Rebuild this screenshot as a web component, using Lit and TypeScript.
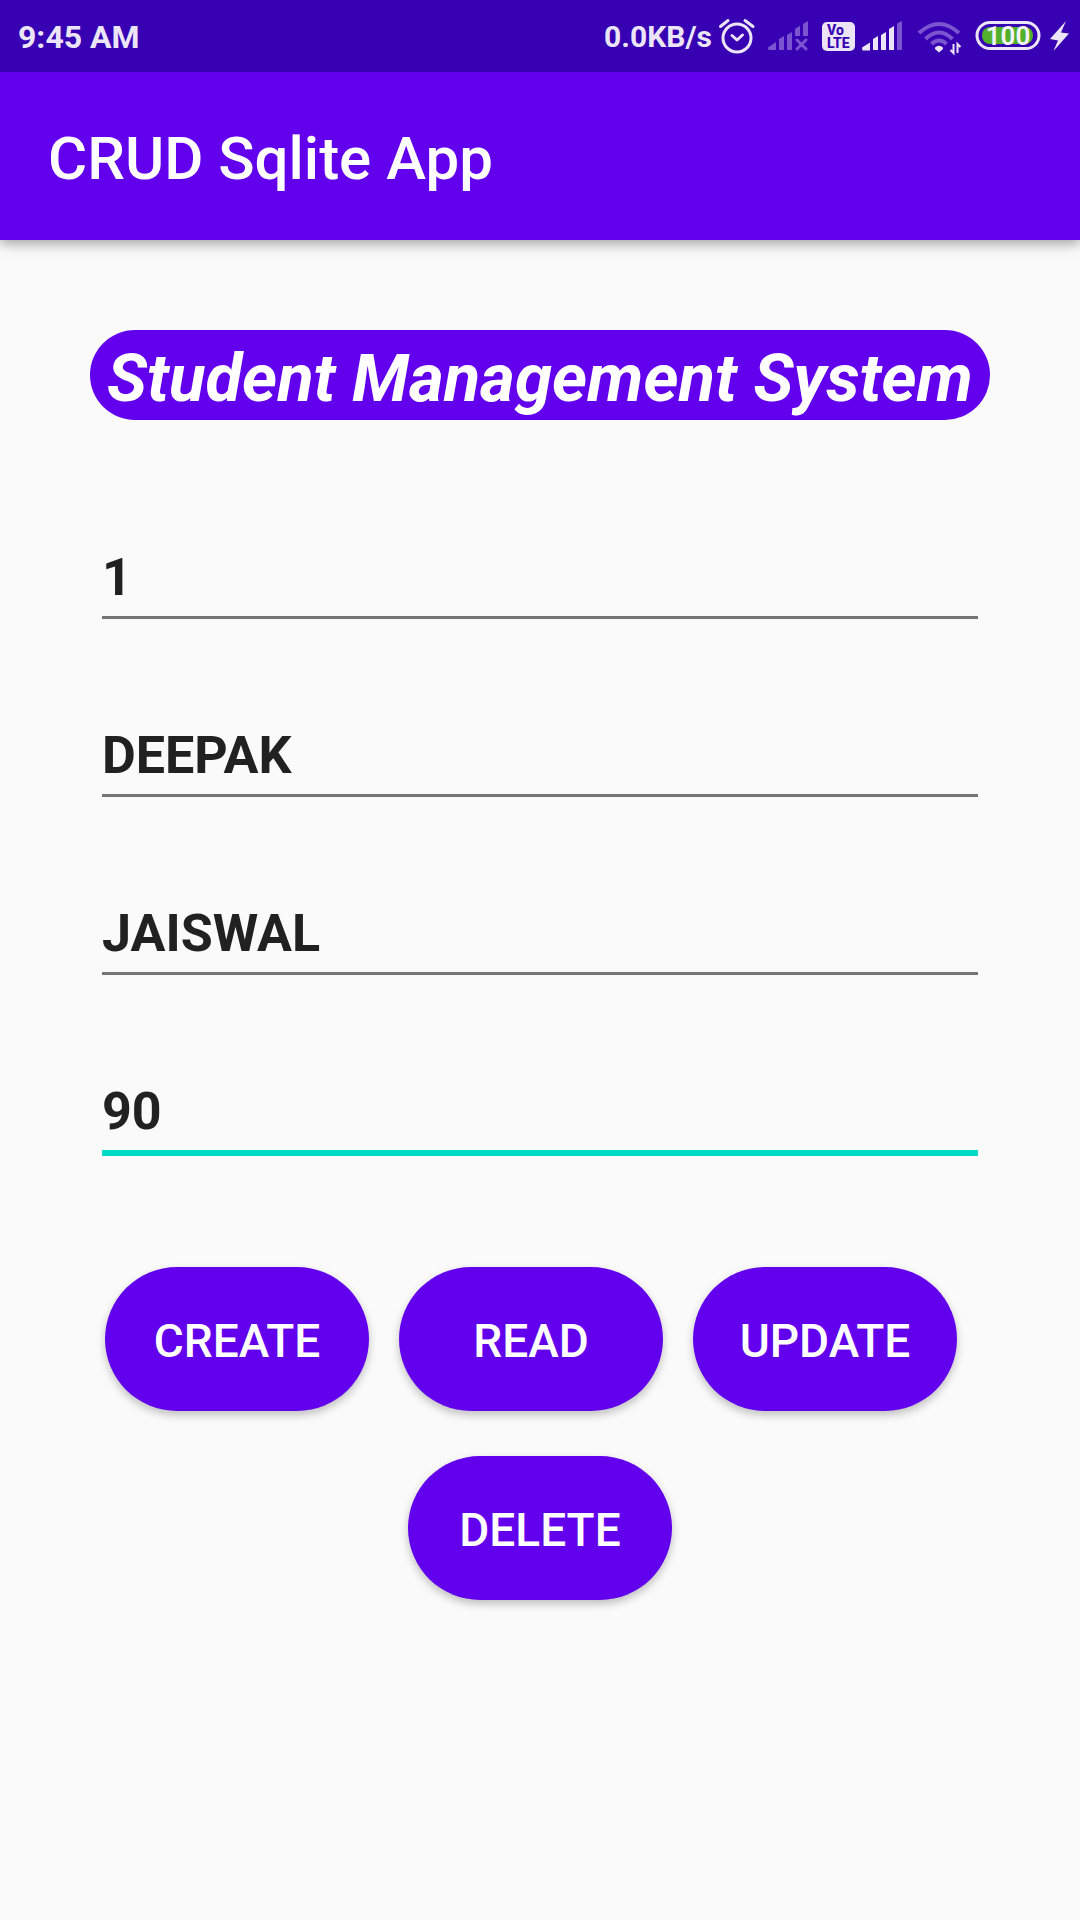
import { LitElement, html, css, svg } from "lit";
import { customElement, state } from "lit/decorators.js";

interface Field {
  name: string;
  label: string;
  value: string;
}

@customElement("status-bar")
class StatusBar extends LitElement {
  static styles = css`
    :host {
      position: relative;
      z-index: 1;
      display: flex;
      align-items: center;
      justify-content: space-between;
      height: 72px;
      padding: 0 0 0 18px;
      background: #3700b3;
      color: #ebe5f7;
      font-family: Roboto, sans-serif;
    }
    .clock,
    .speed {
      padding-top: 2px;
      font-size: 32px;
      font-weight: 700;
      line-height: 40px;
    }
    .tray {
      display: flex;
      align-items: center;
    }
    .speed {
      font-size: 30px;
    }
    .icon {
      display: block;
    }
    .badge {
      font: 800 14px Roboto, sans-serif;
    }
    .level {
      font: 600 26px Roboto, sans-serif;
    }
  `;

  render() {
    return html`
      <time class="clock">9:45 AM</time>
      <div class="tray">
        <span class="speed">0.0KB/s</span>
        <svg class="icon" width="368" height="72" viewBox="712 0 368 72" role="img" aria-label="Status icons">
          ${svg`
          <g fill="none" stroke="#ebe5f7" stroke-width="3" stroke-linecap="round" stroke-linejoin="round">
            <circle cx="737" cy="38" r="14"/>
            <path d="M732 35.500l5 4.500 5.500-5M720.500 26.500l7.500-6M753 26.500l-8-6"/>
          </g>
          <g fill="#7b55cf">
            <path d="M768 47.500L776 42v8h-7q-1 0-1-2.500zM779 39l5-3v14h-5zM787 35l5-3v18h-5zM795 29l5-3.500V36h-5zM803 24l5-3v15h-5z"/>
            <path d="M797 40l9 9M806 40l-9 9" stroke="#7b55cf" stroke-width="3" stroke-linecap="round"/>
          </g>
          <rect x="822" y="22" width="33" height="29" rx="5" fill="#ebe5f7"/>
          <g fill="#3700b3" class="badge">
            <text x="827" y="35">Vo</text>
            <text x="827" y="48">LTE</text>
          </g>
          <path fill="#ebe5f7" d="M862 47.500l8-5v8h-7q-1 0-1-3zM873 39l5-3v14h-5zM881 35l5-3v18h-5zM889 29l5-3v24h-5z"/>
          <path fill="#7b55cf" d="M897 23.500l5-2.500v29h-5z"/>
          <g fill="none" stroke="#7b55cf" stroke-width="4">
            <path d="M919 33q20-18 40 0M925.500 39q13.500-13 27 0M931.500 44q7.500-7 15 0"/>
          </g>
          <path fill="#ebe5f7" d="M935 47.500q4-3.500 8 0v1.500l-4 3.500-4-3.500z"/>
          <path stroke="#ebe5f7" stroke-width="2" fill="none" d="M953.500 44v9l-3-3M957.500 53v-9l3 3"/>
          <rect x="977" y="22.500" width="62" height="26" rx="13" fill="none" stroke="#ebe5f7" stroke-width="3"/>
          <rect x="982" y="27" width="51" height="17" rx="8" fill="#52b02c"/>
          <text x="1008" y="45" class="level" fill="#f6f2fc" text-anchor="middle">100</text>
          <path fill="#ebe5f7" d="M1066 21L1050 39l8 1.500L1053.500 51 1069 33.500l-8-1z"/>
          `}
        </svg>
      </div>
    `;
  }
}

@customElement("app-root")
class AppRoot extends LitElement {
  static styles = css`
    :host {
      display: block;
      min-height: 100vh;
      background: #fafafa;
      font-family: Roboto, sans-serif;
    }
    .appbar {
      box-sizing: border-box;
      display: flex;
      align-items: center;
      height: 168px;
      padding: 5px 48px 0;
      background: #6200ee;
      color: #ffffff;
      box-shadow: 0 4px 12px rgba(0, 0, 0, 0.35);
    }
    .title {
      margin: 0;
      font-size: 60px;
      font-weight: 500;
      line-height: 72px;
    }
    .content {
      padding: 90px 90px 0;
    }
    .banner {
      box-sizing: border-box;
      height: 90px;
      margin: 0;
      padding-top: 4px;
      border-radius: 45px;
      background: #6200ee;
      color: #ffffff;
      font-size: 67px;
      font-style: italic;
      font-weight: 700;
      line-height: 88px;
      text-align: center;
      white-space: nowrap;
    }
    .fields {
      display: grid;
      grid-auto-rows: 178px;
      padding: 119px 12px 0;
    }
    .field {
      box-sizing: border-box;
      width: 100%;
      height: 80px;
      padding: 0;
      border: 0;
      border-radius: 0;
      border-bottom: 3px solid #757575;
      outline: none;
      background: transparent;
      color: #212121;
      caret-color: #03dac5;
      font: 700 52px/72px Roboto, sans-serif;
    }
    .active {
      height: 83px;
      border-bottom: 6px solid #03dac5;
    }
    .actions {
      display: flex;
      flex-wrap: wrap;
      gap: 30px;
      padding: 16px 15px 0;
    }
    .last {
      justify-content: center;
      padding-top: 45px;
    }
    .action {
      width: 264px;
      height: 144px;
      padding: 3px 0 0;
      border: 0;
      border-radius: 72px;
      background: #6200ee;
      color: #ffffff;
      box-shadow: 0 4px 8px rgba(0, 0, 0, 0.24);
      font: 500 46px/60px Roboto, sans-serif;
      text-transform: uppercase;
    }
  `;

  @state() private active = "marks";

  @state() private fields: Field[] = [
    { name: "id", label: "Student id", value: "1" },
    { name: "first", label: "First name", value: "DEEPAK" },
    { name: "surname", label: "Surname", value: "JAISWAL" },
    { name: "marks", label: "Marks", value: "90" },
  ];

  render() {
    return html`
      <status-bar></status-bar>
      <header class="appbar"><h1 class="title">CRUD Sqlite App</h1></header>
      <main class="content">
        <h2 class="banner">Student Management System</h2>
        <form @submit=${(e: Event) => e.preventDefault()}>
          <div class="fields">
            ${this.fields.map(
              (f) => html`<input
                class="field ${f.name === this.active ? "active" : ""}"
                type="text"
                name=${f.name}
                aria-label=${f.label}
                .value=${f.value}
                @focus=${() => (this.active = f.name)}
              />`
            )}
          </div>
          <div class="actions">
            <button class="action" type="button">Create</button>
            <button class="action" type="button">Read</button>
            <button class="action" type="button">Update</button>
          </div>
          <div class="actions last">
            <button class="action" type="button">Delete</button>
          </div>
        </form>
      </main>
    `;
  }
}
